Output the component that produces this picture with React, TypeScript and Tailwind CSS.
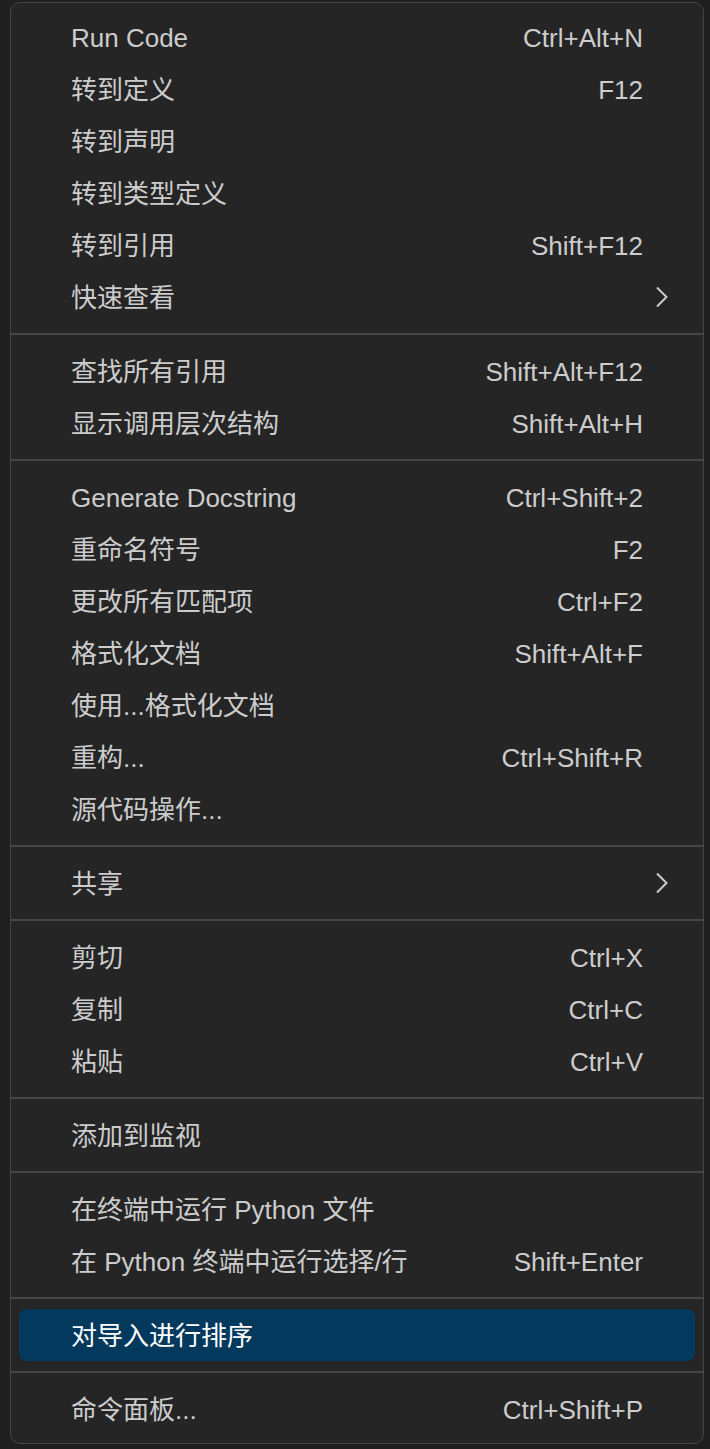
import React from "react";

type Item = { label: string; keys?: string; sub?: boolean; active?: boolean };

const groups: Item[][] = [
  [
    { label: "Run Code", keys: "Ctrl+Alt+N" },
    { label: "转到定义", keys: "F12" },
    { label: "转到声明" },
    { label: "转到类型定义" },
    { label: "转到引用", keys: "Shift+F12" },
    { label: "快速查看", sub: true },
  ],
  [
    { label: "查找所有引用", keys: "Shift+Alt+F12" },
    { label: "显示调用层次结构", keys: "Shift+Alt+H" },
  ],
  [
    { label: "Generate Docstring", keys: "Ctrl+Shift+2" },
    { label: "重命名符号", keys: "F2" },
    { label: "更改所有匹配项", keys: "Ctrl+F2" },
    { label: "格式化文档", keys: "Shift+Alt+F" },
    { label: "使用...格式化文档" },
    { label: "重构...", keys: "Ctrl+Shift+R" },
    { label: "源代码操作..." },
  ],
  [{ label: "共享", sub: true }],
  [
    { label: "剪切", keys: "Ctrl+X" },
    { label: "复制", keys: "Ctrl+C" },
    { label: "粘贴", keys: "Ctrl+V" },
  ],
  [{ label: "添加到监视" }],
  [
    { label: "在终端中运行 Python 文件" },
    { label: "在 Python 终端中运行选择/行", keys: "Shift+Enter" },
  ],
  [{ label: "对导入进行排序", active: true }],
  [{ label: "命令面板...", keys: "Ctrl+Shift+P" }],
];

function Chevron() {
  return (
    <svg width="14" height="22" viewBox="0 0 14 22" className="absolute right-[26px] top-[15px]">
      <path d="M2 1.5 L11.5 11 L2 20.5" fill="none" stroke="#cccccc" strokeWidth="2" />
    </svg>
  );
}

function MenuRow({ item }: { item: Item }) {
  return (
    <div
      className={
        "relative mx-2 flex h-[52px] items-center justify-between rounded-[8px] pt-[2px] pl-[52px] pr-[52px] " +
        (item.active ? "bg-[#04395e] text-white" : "text-[#cccccc]")
      }
    >
      <span>{item.label}</span>
      {item.keys && <span>{item.keys}</span>}
      {item.sub && <Chevron />}
    </div>
  );
}

export default function App() {
  return (
    <div className="min-h-[1449px] bg-[#1f1f1f] pt-[2px] pl-[10px] font-['Liberation_Sans','Noto_Sans_CJK_SC',sans-serif] text-[26px]">
      <div className="w-[694px] rounded-[10px] border border-[#454545] bg-[#252526] py-2">
        {groups.map((g, i) => (
          <div key={i}>
            {i > 0 && <div className="my-[10px] h-[2px] bg-[#454545]" />}
            {g.map((item) => (
              <MenuRow key={item.label} item={item} />
            ))}
          </div>
        ))}
      </div>
    </div>
  );
}
